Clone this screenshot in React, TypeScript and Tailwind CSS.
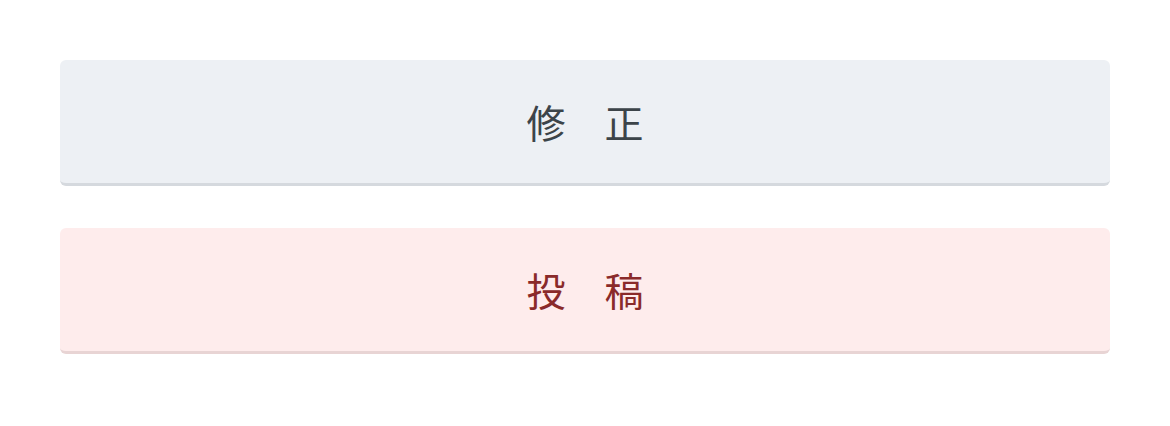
import React from 'react';

const font = "font-['Noto_Sans_CJK_JP','Noto_Sans_CJK_SC',sans-serif]";

const App = () => {
  return (
    <div className={`min-h-[426px] w-full bg-white px-[60px] pt-[60px] ${font}`}>
      <div className="flex flex-col gap-[42px]">
        <button className="h-[126px] w-full rounded-[6px] border-b-[3px] border-[#d5d9de] bg-[#edf0f4] text-[39px] leading-none text-[#3c4449]">
          修　正
        </button>
        <button className="h-[126px] w-full rounded-[6px] border-b-[3px] border-[#e8d4d4] bg-[#feecec] text-[39px] leading-none text-[#8a2a2a]">
          投　稿
        </button>
      </div>
    </div>
  );
};

export default App;
